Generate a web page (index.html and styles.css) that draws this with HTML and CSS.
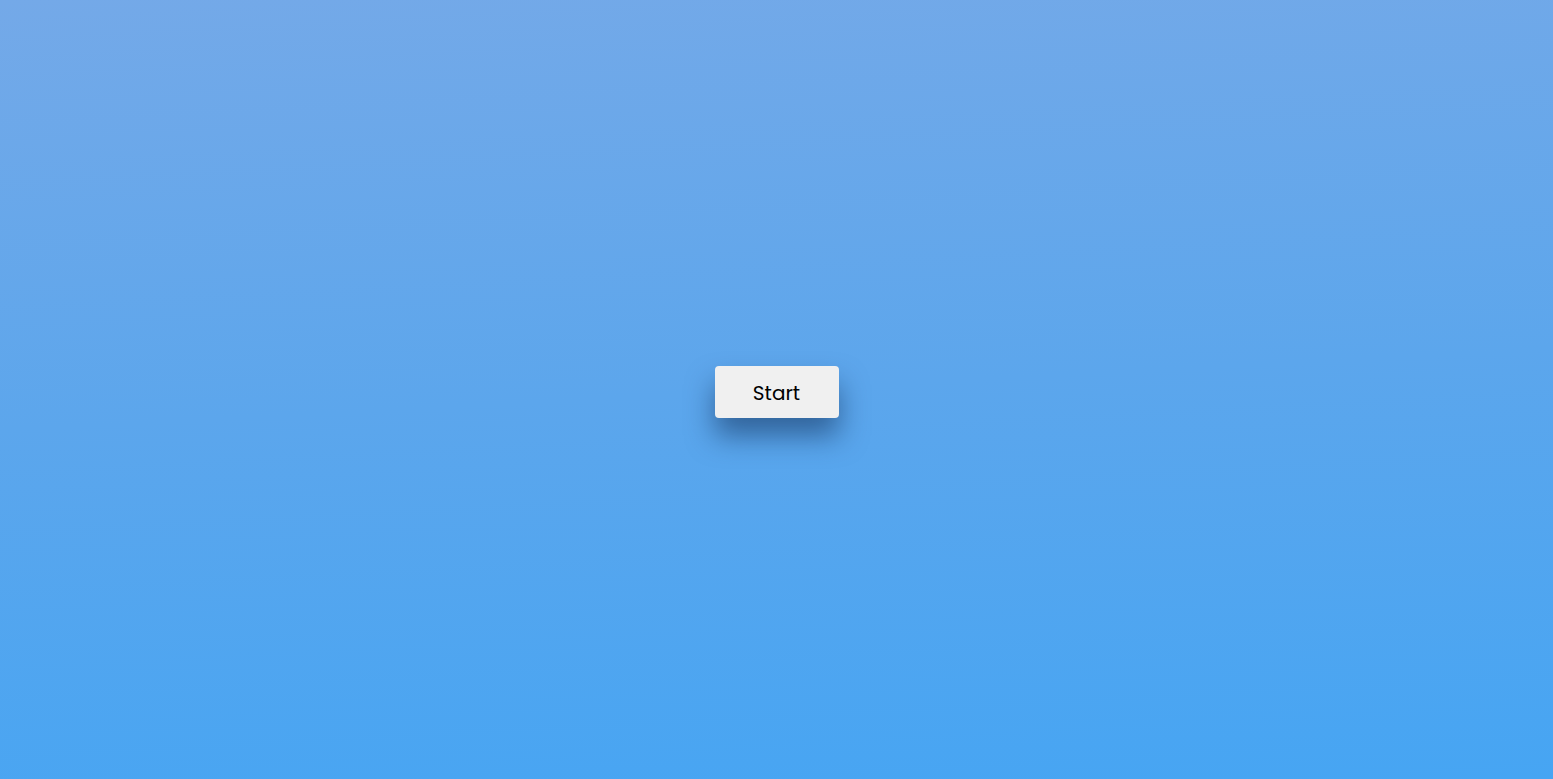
FILE: index.html
```html
<!DOCTYPE html>
<html>
<head>
<meta charset="utf-8">
<link rel="stylesheet" href="styles.css">
</head>
<body>
<main class="stage">
  <button class="start-btn">Start</button>
</main>
</body>
</html>
```
FILE: styles.css
```css
html, body {
  margin: 0;
  padding: 0;
  height: 100%;
}
body {
  background: linear-gradient(177deg, #74a9e8 0%, #5ca6ec 50%, #46a5f3 100%);
  font-family: "Poppins", "Lato", "Noto Sans", sans-serif;
}
.stage {
  height: 100%;
  display: flex;
  align-items: center;
  justify-content: center;
}
.start-btn {
  width: 124px;
  height: 52px;
  margin-top: 5px;
  padding-top: 2px;
  background: #f0f0f0;
  border: none;
  border-radius: 4px;
  font-family: inherit;
  font-size: 20px;
  color: #000;
  box-shadow: 0 18px 28px rgba(10, 35, 75, 0.5);
  cursor: pointer;
}
```
